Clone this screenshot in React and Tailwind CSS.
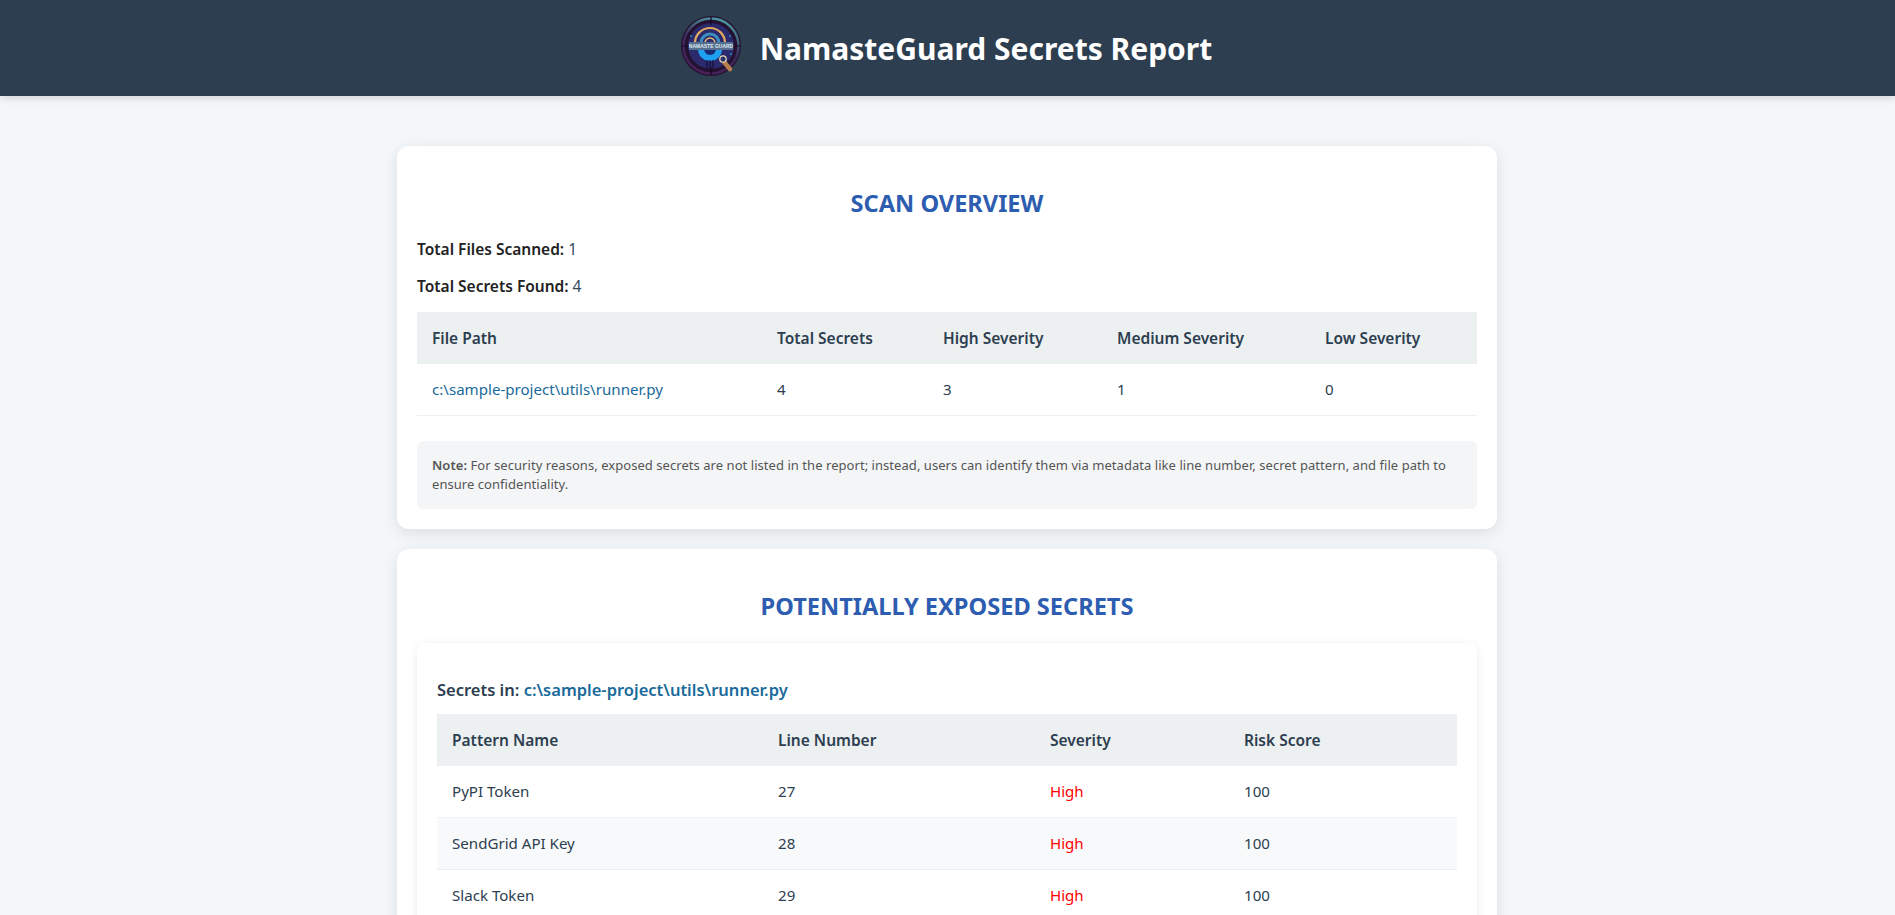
const font = { fontFamily: "'Noto Sans', 'Open Sans', sans-serif" };

const overviewCols = ["w-[345px]", "w-[166px]", "w-[174px]", "w-[208px]", "w-[167px]"];
const secretCols = ["w-[326px]", "w-[272px]", "w-[194px]", "w-[228px]"];

const secrets = [
  { name: "PyPI Token", line: 27, severity: "High", score: 100 },
  { name: "SendGrid API Key", line: 28, severity: "High", score: 100 },
  { name: "Slack Token", line: 29, severity: "High", score: 100 },
];

const Logo = () => (
  <svg width="60" height="60" viewBox="0 0 60 60" className="mb-[4px] shrink-0">
    <defs>
      <linearGradient id="rim" x1="0.7" y1="0" x2="0.3" y2="1">
        <stop offset="0" stopColor="#4c9aa0" />
        <stop offset="0.5" stopColor="#3a2a5c" />
        <stop offset="1" stopColor="#4a1f58" />
      </linearGradient>
    </defs>
    <circle cx="30" cy="30" r="30" fill="#24112f" />
    <circle cx="30" cy="30" r="27.5" fill="none" stroke="url(#rim)" strokeWidth="2.5" />
    <circle cx="30" cy="30" r="23" fill="#2a2a6c" />
    <path d="M30 1v8M30 51v8M1 30h7M52 30h7" stroke="#160b22" strokeWidth="1.2" />
    <path d="M14 27a15 15 0 0 1 30 0" fill="none" stroke="#e0a860" strokeWidth="2.2" />
    <path d="M20 27a9 9 0 0 1 18 0" fill="none" stroke="#3a8fc0" strokeWidth="3" />
    <path d="M24 27a5 5 0 0 1 10 0" fill="none" stroke="#e6b870" strokeWidth="1.5" />
    <path d="M17 33a12 12 0 0 0 24 0z" fill="#1ea0f0" />
    <path d="M23 33a6 6 0 0 0 12 0z" fill="#1b2a70" />
    <path d="M26 44v9M29 44v10M32 44v9" stroke="#191238" strokeWidth="1.2" />
    <circle cx="10" cy="20" r="1" fill="#2f8fc0" />
    <circle cx="49" cy="20" r="1" fill="#2f8fc0" />
    <circle cx="50" cy="38" r="1" fill="#2f8fc0" />
    <rect x="8" y="26" width="44" height="8" fill="#566f90" />
    <text x="30" y="32" textAnchor="middle" fontSize="5" fontWeight="700" fill="#dfe7ef" fontFamily="'Liberation Sans', sans-serif">NAMASTE GUARD</text>
    <path d="M43 46l6 7" stroke="#b97f4c" strokeWidth="4.5" strokeLinecap="round" />
    <circle cx="42" cy="43" r="3.2" fill="#27306c" stroke="#e8d9b0" strokeWidth="1.3" />
  </svg>
);

const Th = ({ className, children }) => (
  <th className={`${className} px-[15px] py-[15px] text-left text-[15.5px] font-semibold leading-[22px] text-[#2c3e50]`}>{children}</th>
);

const Td = ({ className, children }) => (
  <td className={`${className} border-b border-[#ecf0f1] px-[15px] py-[15px] text-[15.1px] leading-[21px] text-[#2c3e50]`}>{children}</td>
);

const App = () => {
  return (
    <div style={font} className="h-[915px] overflow-hidden bg-[#f4f7f9]">
      <header className="flex h-[96px] items-center justify-center gap-[19px] bg-[#2c3e50] pr-[2px] shadow-[0_2px_8px_rgba(0,0,0,0.15)]">
        <Logo />
        <h1 className="text-[30px] font-bold text-white">NamasteGuard Secrets Report</h1>
      </header>

      <main className="mt-[50px] ml-[397px] flex w-[1100px] flex-col gap-5">
        <section className="rounded-xl bg-white p-5 shadow-[0_4px_15px_rgba(0,0,0,0.1)]">
          <h2 className="mt-[21px] mb-[19px] text-center text-[23.6px] font-bold leading-[32px] text-[#2d5db0]">SCAN OVERVIEW</h2>
          <p className="mb-[15px] text-[15.5px] leading-[22px] text-[#34495e]">
            <strong className="font-semibold text-[#222]">Total Files Scanned:</strong> 1
          </p>
          <p className="mb-[15px] text-[15.5px] leading-[22px] text-[#34495e]">
            <strong className="font-semibold text-[#222]">Total Secrets Found:</strong> 4
          </p>
          <table className="w-full table-fixed border-collapse">
            <thead>
              <tr className="bg-[#ecf0f1]">
                <Th className={overviewCols[0]}>File Path</Th>
                <Th className={overviewCols[1]}>Total Secrets</Th>
                <Th className={overviewCols[2]}>High Severity</Th>
                <Th className={overviewCols[3]}>Medium Severity</Th>
                <Th className={overviewCols[4]}>Low Severity</Th>
              </tr>
            </thead>
            <tbody>
              <tr>
                <Td><span className="text-[#1a6a9a]">c:\sample-project\utils\runner.py</span></Td>
                <Td>4</Td>
                <Td>3</Td>
                <Td>1</Td>
                <Td>0</Td>
              </tr>
            </tbody>
          </table>
          <div className="mt-[25px] rounded-md bg-[#f4f5f7] px-[15px] py-[15px] text-[13px] leading-[19px] tracking-[0.05px] text-[#555]">
            <strong className="font-semibold">Note:</strong> For security reasons, exposed secrets are not listed in the report; instead, users can identify them via metadata like line number, secret pattern, and file path to ensure confidentiality.
          </div>
        </section>

        <section className="rounded-xl bg-white p-5 shadow-[0_4px_15px_rgba(0,0,0,0.1)]">
          <h2 className="mt-[21px] mb-[21px] text-center text-[23.6px] font-bold leading-[32px] text-[#2d5db0]">POTENTIALLY EXPOSED SECRETS</h2>
          <div className="rounded-lg bg-white px-5 pt-[35px] pb-5 shadow-[0_2px_10px_rgba(0,0,0,0.08)]">
            <h3 className="mb-[12px] text-[16.5px] font-semibold leading-[24px] text-[#2c3e50]">
              Secrets in: <span className="text-[#1a6a9a]">c:\sample-project\utils\runner.py</span>
            </h3>
            <table className="w-full table-fixed border-collapse">
              <thead>
                <tr className="bg-[#ecf0f1]">
                  <Th className={secretCols[0]}>Pattern Name</Th>
                  <Th className={secretCols[1]}>Line Number</Th>
                  <Th className={secretCols[2]}>Severity</Th>
                  <Th className={secretCols[3]}>Risk Score</Th>
                </tr>
              </thead>
              <tbody>
                {secrets.map((s, i) => (
                  <tr key={s.line} className={i % 2 === 1 ? "bg-[#f8f9fa]" : ""}>
                    <Td>{s.name}</Td>
                    <Td>{s.line}</Td>
                    <Td><span className="text-[#ff0000]">{s.severity}</span></Td>
                    <Td>{s.score}</Td>
                  </tr>
                ))}
              </tbody>
            </table>
          </div>
        </section>
      </main>
    </div>
  );
};

export default App;
